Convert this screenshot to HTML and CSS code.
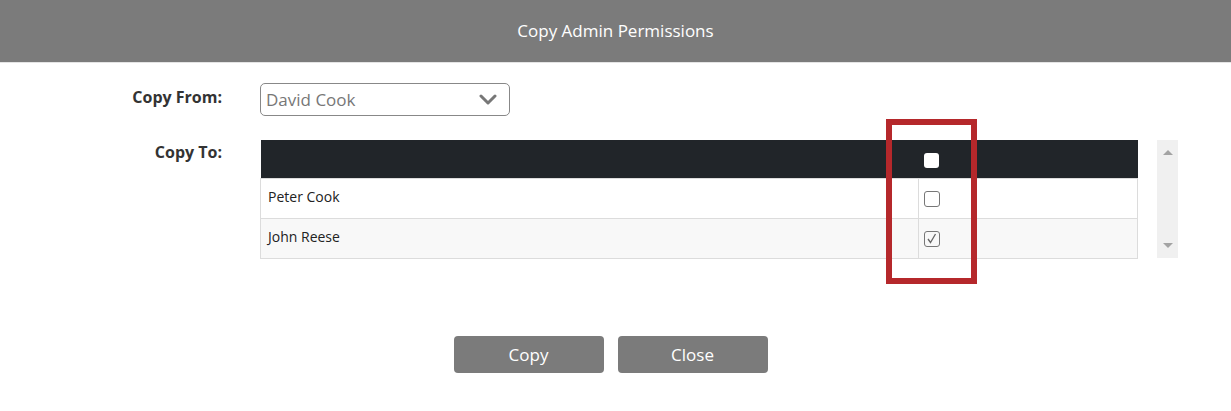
FILE: index.html
```html
<!DOCTYPE html>
<html lang="en">
<head>
    <meta charset="UTF-8">
    <title>Copy Admin Permissions</title>
    <link rel="stylesheet" href="styles.css">
</head>
<body>
    <div class="modal-header">Copy Admin Permissions</div>

    <div class="modal-body">
        <div class="field-row from-row">
            <label class="field-label">Copy From:</label>
            <div class="select-box">
                <span>David Cook</span>
                <svg class="chevron" width="18" height="11" viewBox="0 0 18 11">
                    <path d="M2 2 L9 9 L16 2" fill="none" stroke="#777" stroke-width="3" stroke-linecap="round" stroke-linejoin="round"/>
                </svg>
            </div>
        </div>

        <div class="field-row to-row">
            <label class="field-label">Copy To:</label>
            <div class="table-wrap">
                <table class="users-table">
                    <thead>
                        <tr>
                            <th class="name-col"></th>
                            <th class="check-col"><span class="check head-check"></span></th>
                        </tr>
                    </thead>
                    <tbody>
                        <tr>
                            <td class="name-col">Peter Cook</td>
                            <td class="check-col"><span class="check"></span></td>
                        </tr>
                        <tr class="odd">
                            <td class="name-col">John Reese</td>
                            <td class="check-col">
                                <span class="check">
                                    <svg width="13" height="13" viewBox="0 0 13 13">
                                        <path d="M3 7 L5.5 10.5 L10.5 2" fill="none" stroke="#666" stroke-width="1.3"/>
                                    </svg>
                                </span>
                            </td>
                        </tr>
                    </tbody>
                </table>
                <div class="highlight"></div>
            </div>
            <div class="scrollbar">
                <span class="arrow up"></span>
                <span class="arrow down"></span>
            </div>
        </div>

        <div class="actions">
            <button>Copy</button>
            <button>Close</button>
        </div>
    </div>
</body>
</html>
```

FILE: styles.css
```css
body {
    margin: 0;
    font-family: "Open Sans", "Liberation Sans", sans-serif;
    background-color: #fff;
    color: #222;
}

.modal-header {
    height: 62px;
    line-height: 62px;
    background-color: #7b7b7b;
    border-bottom: 1px solid #e4e4e4;
    color: #fff;
    text-align: center;
    font-size: 17px;
}

.modal-body {
    padding-top: 20px;
}

.field-row {
    display: flex;
    align-items: flex-start;
}

.field-label {
    width: 222px;
    margin-right: 38px;
    text-align: right;
    font-weight: bold;
    font-size: 16px;
    color: #333;
}

.from-row .field-label {
    padding-top: 3px;
}

.select-box {
    width: 250px;
    height: 33px;
    box-sizing: border-box;
    border: 1px solid #888;
    border-radius: 5px;
    display: flex;
    align-items: center;
    justify-content: space-between;
    padding: 0 12px 1px 5px;
    font-size: 17px;
    color: #777;
}

.to-row {
    margin-top: 24px;
}

.to-row .field-label {
    padding-top: 1px;
}

.table-wrap {
    position: relative;
}

.users-table {
    width: 878px;
    border-collapse: collapse;
    font-size: 14px;
}

.users-table th {
    background-color: #212529;
    height: 38px;
    padding: 0;
}

.users-table td {
    height: 40px;
    padding: 0 0 4px 7px;
    box-sizing: border-box;
    border: 1px solid #dcdcdc;
    color: #222;
}

.users-table tr.odd td {
    background-color: #f8f8f8;
}

.name-col {
    width: 658px;
}

.users-table .check-col {
    text-align: left;
    padding-left: 5px;
    padding-bottom: 0;
}

.check {
    display: inline-block;
    width: 14px;
    height: 14px;
    border: 1px solid #777;
    border-radius: 3px;
    vertical-align: middle;
    position: relative;
    top: -1px;
}

.check svg {
    display: block;
    margin: 0;
}

.head-check {
    width: 15px;
    height: 15px;
    border: none;
    background-color: #fff;
    border-radius: 3px;
    top: 0;
}

.highlight {
    position: absolute;
    left: 626px;
    top: -21px;
    width: 91px;
    height: 165px;
    box-sizing: border-box;
    border: 6px solid #b5282b;
}

.scrollbar {
    margin-left: 19px;
    width: 21px;
    height: 118px;
    background-color: #f0f0f0;
    display: flex;
    flex-direction: column;
    justify-content: space-between;
    align-items: center;
    padding: 10px 0;
    box-sizing: border-box;
}

.arrow {
    width: 0;
    height: 0;
    border-left: 5px solid transparent;
    border-right: 5px solid transparent;
}

.arrow.up {
    border-bottom: 5px solid #a3a3a3;
}

.arrow.down {
    border-top: 5px solid #a3a3a3;
}

.actions {
    display: flex;
    justify-content: center;
    gap: 14px;
    margin-top: 77px;
    padding-right: 10px;
}

.actions button {
    width: 150px;
    height: 37px;
    border: none;
    border-radius: 4px;
    background-color: #7b7b7b;
    color: #fff;
    font-family: "Open Sans", "Liberation Sans", sans-serif;
    font-size: 17px;
    padding-bottom: 2px;
}
```
